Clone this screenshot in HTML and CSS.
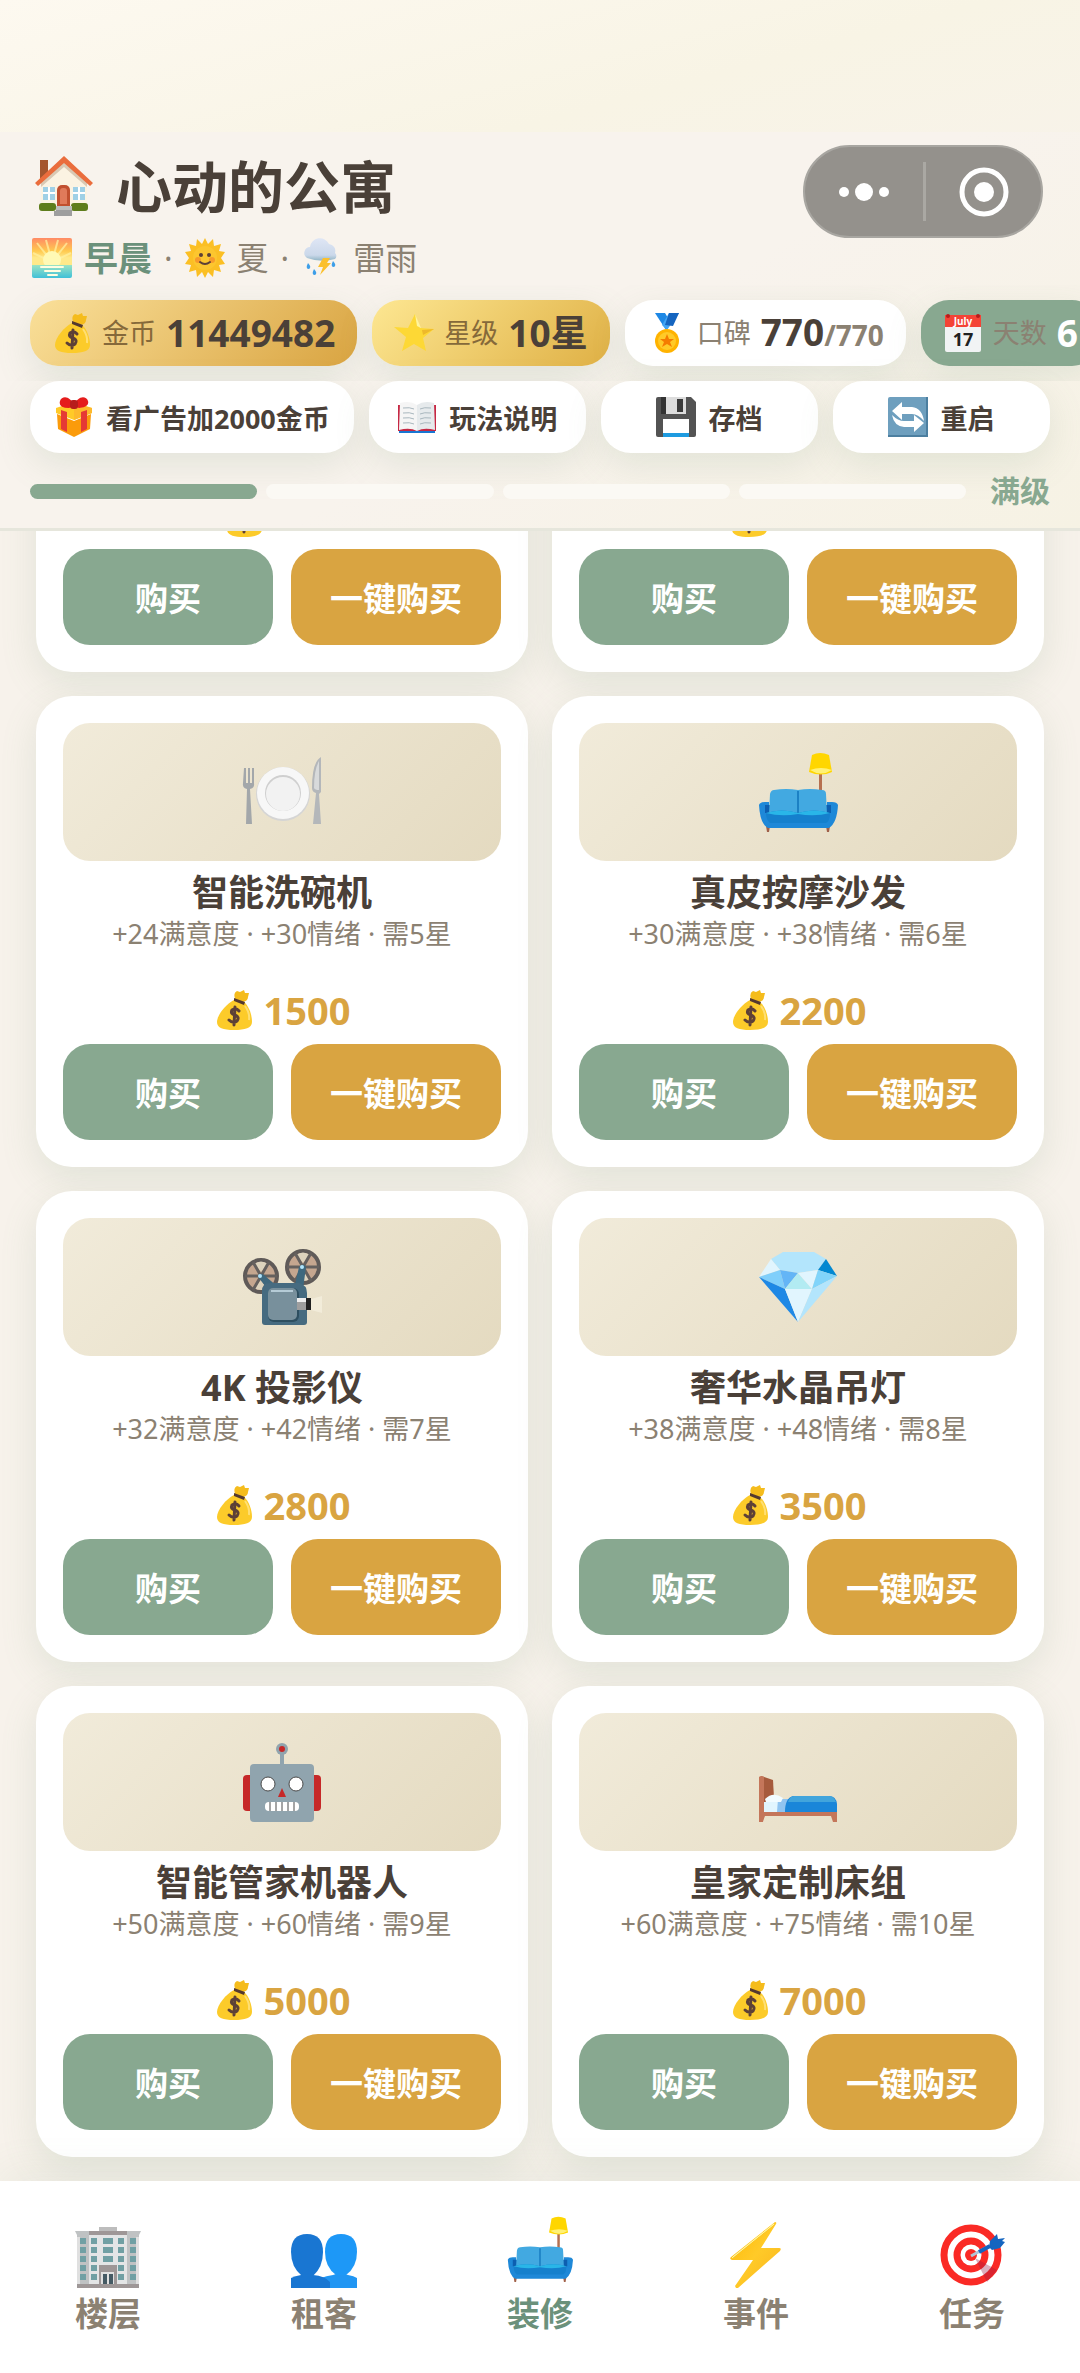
FILE: index.html
```html
<!DOCTYPE html>
<html lang="zh-CN">
<head>
<meta charset="utf-8">
<meta name="viewport" content="width=device-width, initial-scale=1">
<title>心动的公寓</title>
<link rel="stylesheet" href="styles.css">
</head>
<body>
<svg class="sprite" aria-hidden="true">
  <defs>
    <linearGradient id="g-sky" x1="0" y1="0" x2="0" y2="1"><stop offset="0" stop-color="#ff8a65"/><stop offset=".45" stop-color="#ffca4f"/><stop offset=".68" stop-color="#ffe98a"/></linearGradient>
    <linearGradient id="g-sea" x1="0" y1="0" x2="0" y2="1"><stop offset="0" stop-color="#9be3c4"/><stop offset="1" stop-color="#3fc0d8"/></linearGradient>
    <linearGradient id="g-bolt" x1="0" y1="0" x2="1" y2="1"><stop offset="0" stop-color="#feb804"/><stop offset=".5" stop-color="#ffca28"/><stop offset="1" stop-color="#f9b51e"/></linearGradient>
    <linearGradient id="g-cloud" x1="0" y1="0" x2="0" y2="1"><stop offset="0" stop-color="#dfe6f5"/><stop offset=".75" stop-color="#cbd8ea"/><stop offset="1" stop-color="#8fb4c4"/></linearGradient>
  </defs>
  <symbol id="i-house" viewBox="0 0 58 60">
    <path d="M5 4h8v20H5z" fill="#a5562f"/>
    <path d="M6 26 29 5l23 21v25H6z" fill="#fbf3e2"/>
    <path d="M6 26 29 6l23 20v5L29 11 6 31z" fill="#d9c9b4"/>
    <path d="M29 0 58 27l-3 3L29 7 3 30l-3-3z" fill="#ea6d3d"/>
    <rect x="8" y="31" width="12" height="13" fill="#9fd0e6"/><path d="M14 31v13M8 37h12" stroke="#fff" stroke-width="2"/>
    <rect x="38" y="31" width="12" height="13" fill="#9fd0e6"/><path d="M44 31v13M38 37h12" stroke="#fff" stroke-width="2"/>
    <path d="M22 50V34a5 5 0 0 1 5-5h3a5 5 0 0 1 5 5v16z" fill="#c1502f"/><path d="M25 48V35a3 3 0 0 1 3-3h1a3 3 0 0 1 3 3v13z" fill="#e07a5a"/>
    <rect x="4" y="47" width="17" height="8" rx="3" fill="#5e7d1c"/><rect x="36" y="47" width="17" height="8" rx="3" fill="#5e7d1c"/>
    <path d="M21 50h16v10H19v-5h2z" fill="#9e9e9e"/><path d="M21 50h16v4H21z" fill="#bdbdbd"/>
  </symbol>
  <symbol id="i-sunrise" viewBox="0 0 40 40">
    <rect width="40" height="29" rx="2" fill="url(#g-sky)"/>
    <path d="M20 24 1 15M20 24 5 5M20 24 14 2M20 24 26 2M20 24 35 5M20 24 39 15" stroke="#fff0a0" stroke-width="2" opacity=".75"/>
    <circle cx="20" cy="22" r="9" fill="#fff9b5"/>
    <path d="M0 27h40v11a2 2 0 0 1-2 2H2a2 2 0 0 1-2-2z" fill="url(#g-sea)"/>
    <path d="M9 29h22M13 33h15M16 37h9" stroke="#fffde0" stroke-width="2" stroke-linecap="round"/>
  </symbol>
  <symbol id="i-sun" viewBox="0 0 40 40">
    <path d="m20 0 3 6 5-5 1 7 7-2-2 7 6 1-4 6 4 6-6 1 2 7-7-2-1 7-5-5-3 6-3-6-5 5-1-7-7 2 2-7-6-1 4-6-4-6 6-1-2-7 7 2 1-7 5 5z" fill="#fbbf24"/>
    <circle cx="20" cy="20" r="12" fill="#fcc62f"/><circle cx="13" cy="22" r="3" fill="#f79a2b"/><circle cx="27" cy="22" r="3" fill="#f79a2b"/>
    <circle cx="16" cy="17" r="2" fill="#5d4037"/><circle cx="24" cy="17" r="2" fill="#5d4037"/><path d="M15 24q5 4 10 0" fill="none" stroke="#5d4037" stroke-width="2" stroke-linecap="round"/>
  </symbol>
  <symbol id="i-storm" viewBox="0 0 40 40">
    <path d="M6 20a6 6 0 0 1 3-11A10 10 0 0 1 28 6a7 7 0 0 1 6 9 4 4 0 0 1 0 6q-14 4-28-1z" fill="url(#g-cloud)"/>
    <path d="M22 20h7l-3 5h4L19 37l3-8h-5z" fill="#fbc02d"/>
    <path d="M7 25q4 4 1 6-4 0-1-6zM13 31q4 4 1 6-4 0-1-6zM32 23q4 4 1 6-4 0-1-6z" fill="#3d9ee8"/>
  </symbol>
  <symbol id="i-bag" viewBox="0 0 40 40">
    <path d="M21 9q-2-6 2-8l3 1 4-2 1 3 4 0-1 4q0 4-5 5z" fill="#f5bc1c"/>
    <path d="M20 10c-8 4-17 15-17 22 0 6 6 8 17 8s18-2 18-8c0-7-3-16-8-20z" fill="#fccb2a"/>
    <path d="M31 16q5 7 4 14" stroke="#ffdf73" stroke-width="2" fill="none"/>
    <path d="m20 8 11 4-1 3-10-4z" fill="#543930"/>
    <path d="M25 21q-3-4-7-1-2 4 3 5 5 2 2 6-4 3-8-1M21 17l-1 18" fill="none" stroke="#5d4037" stroke-width="3" stroke-linecap="round"/>
  </symbol>
  <symbol id="i-star" viewBox="0 0 40 40">
    <path d="m21 1 5 14 14 1-11 9 3 13-12-7-12 7 4-14L0 14l14 1z" fill="#fdd835"/><path d="m21 1 2 12 4 2z" fill="#fff59d"/><path d="m28 17 12-1-11 6z" fill="#eeb92b"/>
  </symbol>
  <symbol id="i-medal" viewBox="0 0 40 40">
    <path d="M8 0h10l6 10-5 7z" fill="#1e88e5"/><path d="M32 0H22l-7 12 5 5z" fill="#42a5f5"/><path d="M22 0h10l-6 13-8-1z" fill="#1565c0"/>
    <circle cx="20" cy="28" r="12" fill="#ffb300"/><circle cx="20" cy="28" r="9" fill="#ffca28"/><path d="m20 21 2 5 5 0-4 3 2 5-5-3-5 3 2-5-4-3 5 0z" fill="#f57c00"/>
  </symbol>
  <symbol id="i-gift" viewBox="0 0 40 40">
    <path d="m3 17 17 7v16L4 32zM37 17l-17 7v16l16-8z" fill="#fb9b0b"/><path d="m2 11 18-6 18 6v5l-18 7-18-7z" fill="#ffca28"/><path d="m20 7 18 4v5l-18 7z" fill="#fdb92c"/>
    <path d="m7 13 6 2v20l-6-3zM27 15l6-2v19l-6 3z" fill="#e53935"/>
    <path d="M20 9C17-1 8-2 6 4q-2 7 9 7zM20 9c3-10 12-11 14-5 2 7-9 7-9 7z" fill="#e51c1c"/><rect x="16" y="3" width="8" height="9" rx="3" fill="#b71c1c"/>
  </symbol>
  <symbol id="i-book" viewBox="0 0 40 40">
    <path d="M1 8h38v26H1z" fill="#c62844"/><path d="M2 34h36v2H2z" fill="#1976d2"/>
    <path d="M3 6q10-3 17 2v26q-7-4-18-1z" fill="#f5f5f5"/><path d="M37 6Q27 3 20 8v26q7-4 18-1z" fill="#e6eaec"/>
    <path d="M6 11q7-1 11 1M6 16q7-1 11 1M6 21q7-1 11 1M6 26q7-1 11 1M34 11q-7-1-11 1M34 16q-7-1-11 1M34 21q-7-1-11 1M34 26q-7-1-11 1" fill="none" stroke="#a9b7be" stroke-width="1"/>
  </symbol>
  <symbol id="i-disk" viewBox="0 0 40 40">
    <path d="M2 0h33l5 5v33a2 2 0 0 1-2 2H2a2 2 0 0 1-2-2V2a2 2 0 0 1 2-2z" fill="#535353"/><path d="M5 0h6v17H5z" fill="#333"/><path d="M10 0h20v17H10z" fill="#dcdcdc"/><path d="M21 2h6v13h-6z" fill="#3a3a3a"/>
    <path d="M7 22h26v18H7z" fill="#fff"/><path d="M7 36h26v4H7z" fill="#1e9be0"/>
  </symbol>
  <symbol id="i-cycle" viewBox="0 0 40 40">
    <rect width="40" height="40" rx="2" fill="#6e9fbe"/><path d="M0 38h40v2H0zM38 0h2v40h-2z" fill="#4c7fa0"/>
    <path d="m4 14 10-9v5h10q10 1 12 14-6-7-12-7H14v6zM36 26l-10 9v-5H16Q6 29 4 18q6 6 12 6h10v-6z" fill="#fff"/>
  </symbol>
  <symbol id="i-plate" viewBox="0 0 80 80">
    <path d="M2 16h2v15h2V16h2v15h2V16h2v15q1 5-4 6l2 35H4l1-35q-5-1-4-6z" fill="#a3a7aa"/>
    <circle cx="41" cy="42" r="27" fill="#d5d5d5"/><circle cx="41" cy="41" r="26" fill="#f7f7f7"/><circle cx="41" cy="41" r="18" fill="#cfcfcf"/><circle cx="41" cy="42" r="17" fill="#f2f2f2"/>
    <path d="M79 5v35l-2 2 2 30h-8l3-31q-4-1-4-5 0-26 9-31z" fill="#b4b7ba"/><path d="M77 9v29q-4 0-5-2 0-18 5-27z" fill="#d8dadb"/>
  </symbol>
  <symbol id="i-sofa" viewBox="0 0 80 80">
    <path d="M61 18h3v24h-3z" fill="#b6704f"/><path d="M54 3q8-4 17 0l3 17q-11 5-23 0z" fill="#ffd600"/><path d="M52 18q11-4 22 0-11 7-22 0z" fill="#fff176"/>
    <path d="M8 74h4l-1 6H9zM68 74h4l-1 6h-2z" fill="#a1614a"/>
    <path d="M1 53q1-3 6-3h4v15h58V50h5q5 0 6 3-1 18-9 23H10Q2 72 1 53z" fill="#1e88d8"/>
    <path d="M7 53h6v8H7zM67 53h6v8h-6z" fill="#0d5eb0"/>
    <path d="M11 62 12 42q1-4 4-4 12-2 24 0 12-2 24 0 4 0 4 4l1 20z" fill="#42a9e1"/><path d="M40 39v22" stroke="#1c81c4" stroke-width="2"/>
    <path d="M8 61q16-5 32 0 16-5 32 0 0 8-4 10H12q-4-3-4-10z" fill="#1580cd"/><path d="M8 61q16-5 32 0 16-5 32 0-15 4-32 1-17 3-32-1z" fill="#29b6e8"/>
  </symbol>
  <symbol id="i-projector" viewBox="0 0 80 80">
    <g fill="#c5a68f" stroke="#5f5a58" stroke-width="4"><circle cx="19" cy="29" r="16"/><circle cx="61" cy="20" r="16"/></g>
    <g fill="#ddd3bd"><path d="m19 25-7-8q7-5 14 0zM19 33l-7 8q7 4 14 0zM61 16l-7-8q7-5 14 0zM61 24l-7 8q7 4 14 0z"/></g>
    <path d="M3 29h32M11 15l16 28M27 15 11 43M45 20h32M53 6l16 28M69 6 53 34" stroke="#65605e" stroke-width="3"/>
    <path d="M16 30q2-5 6-2l14 12-8 5zM57 20q4-5 7 0l-3 22h-9z" fill="#3e687e"/><circle cx="18" cy="29" r="2" fill="#b3e5fc"/><circle cx="60" cy="20" r="2" fill="#b3e5fc"/>
    <path d="M28 36h29q8 2 8 10v29q0 3-3 3H23q-3 0-3-3V44q0-8 8-8z" fill="#466b80"/><rect x="26" y="41" width="31" height="34" rx="6" fill="#2e4f60"/><rect x="26" y="41" width="29" height="32" rx="5" fill="#78909c"/><path d="M29 44h22" stroke="#b5cbd6" stroke-width="2"/>
    <path d="m69 52 11-3v17l-11-3z" fill="#fffdf0" opacity=".4"/><path d="M55 51h9v12h-9z" fill="#9e9e9e"/><path d="M55 51h9v4h-9z" fill="#eee"/><path d="M64 51h5v12h-5z" fill="#212121"/>
  </symbol>
  <symbol id="i-gem" viewBox="0 0 80 80">
    <path d="m25 5h31l12 7-8 11-20 3-18-3-9-11z" fill="#b3e5fc"/><path d="M13 12 1 30l21-7z" fill="#e1f5fe"/><path d="m68 12 11 17-19-6z" fill="#0288d1"/>
    <path d="m1 30 21-7 5 19z" fill="#80cffb"/><path d="m22 23 18 3-13 16z" fill="#64b5f6"/><path d="m40 26 14 16H27z" fill="#b2ebf2"/><path d="m40 26 20-3-6 19z" fill="#e1f5fe"/><path d="m60 23 19 6-25 13z" fill="#81d4fa"/>
    <path d="m1 30 26 12 13 33z" fill="#1e88e5"/><path d="M27 42h27L40 75z" fill="#e1f5fe"/><path d="m54 42 25-13-39 46z" fill="#b3e5fc"/>
  </symbol>
  <symbol id="i-robot" viewBox="0 0 80 80">
    <path d="M38 10h4v14h-4z" fill="#90a4ae"/><circle cx="40" cy="7" r="6" fill="#90a4ae"/><circle cx="40" cy="7" r="3" fill="#c62828"/>
    <rect x="1" y="33" width="14" height="36" rx="4" fill="#c62828"/><rect x="65" y="33" width="14" height="36" rx="4" fill="#c62828"/><rect x="8" y="22" width="64" height="58" rx="4" fill="#90a4ae"/>
    <g fill="#fff" stroke="#4a4a4a"><circle cx="26" cy="42" r="7"/><circle cx="54" cy="42" r="7"/></g><path d="m40 46 4 9h-8z" fill="#c62828"/>
    <rect x="23" y="60" width="34" height="9" rx="4" fill="#fff"/><path d="M28 60v9M34 60v9M40 60v9M46 60v9M52 60v9" stroke="#4a4a4a" stroke-width="1"/>
  </symbol>
  <symbol id="i-bed" viewBox="0 0 80 80">
    <path d="m3 34 12 4 1 18v14H4z" fill="#a65b3d"/><path d="M1 35q2-2 5 0v37l-1 8H1z" fill="#c4765a"/>
    <path d="M6 60h25v10H6z" fill="#e1f5fe"/><path d="M20 57h12v13H19z" fill="#90c4f0"/><path d="M7 57q8-8 18-1l-2 4H8z" fill="#f1fbff"/>
    <path d="M27 70q0-14 8-16h36q7 0 8 8v8z" fill="#1a86d9"/><path d="M30 60q2-6 6-6h35q5 0 7 6z" fill="#42a5dc"/>
    <path d="M5 70h74v10h-4l-2-6H7l-2 5z" fill="#c4765a"/>
  </symbol>
  <symbol id="i-building" viewBox="0 0 66 66">
    <path d="M24 5h18v6H24z" fill="#bdbdbd"/><path d="M0 9h66l-2 4v51H2V13z" fill="#bfc2c3"/><path d="M14 12h38v50H14z" fill="#e3e5e6"/><path d="M14 9h38v4H14z" fill="#9e9797"/>
    <path d="M2 15h3v47H2zM61 15h3v47h-3z" fill="#e0e0e0"/>
    <path d="M5 16h6v6H5zm11 0h6v6h-6zm12 0h10v6H28zm15 0h6v6h-6zm12 0h6v6h-6zM5 25h6v6H5zm11 0h6v6h-6zm12 0h10v6H28zm15 0h6v6h-6zm12 0h6v6h-6zM5 34h6v6H5zm11 0h6v6h-6zm12 0h10v6H28zm15 0h6v6h-6zm12 0h6v6h-6zM5 43h6v6H5zm11 0h6v6h-6zm27 0h6v6h-6zm12 0h6v6h-6zM5 52h6v6H5zm11 0h6v6h-6zm27 0h6v6h-6zm12 0h6v6h-6z" fill="#70a0a4"/>
    <path d="M24 43h18v20H24z" fill="#9e9797"/><path d="M26 50h13v13H26z" fill="#e0e0e0"/><path d="M28 52h4v10h-4zM34 52h4v10h-4z" fill="#455a64"/><path d="M2 62h62v4H2z" fill="#9e9797"/>
  </symbol>
  <symbol id="i-people" viewBox="0 0 66 66">
    <path d="M30 66V56q5-2 12-3l3-1h9l3 1q6 1 9 3v10z" fill="#2196f3"/><path d="M34 30q0-18 16-18t16 18q0 15-11 23H45Q34 45 34 30z" fill="#1d98f7"/>
    <path d="M0 66V56q4-2 10-3h12q12 1 17 7v6z" fill="#1976d2"/><path d="M0 30q0-18 16-18t16 18q0 15-10 24H11Q0 45 0 30z" fill="#1976d2"/>
  </symbol>
  <symbol id="i-bolt" viewBox="0 0 66 66"><path d="M52 0q2 0 1 2L38 26h18q3 0 1 3L15 66h-2l-1-2 18-26H9q-3-1-1-3z" fill="url(#g-bolt)"/><path d="M51 2 11 34l-2 2z" stroke="#fff59d" stroke-width="1"/></symbol>
  <symbol id="i-target" viewBox="0 0 66 66">
    <g stroke-width="7" fill="#fff" stroke="#fa2a25"><circle cx="32" cy="33" r="27"/><circle cx="32" cy="33" r="14"/></g><circle cx="32" cy="33" r="6" fill="#fa2a25"/>
    <path d="m36 36 22 12-10 12z" fill="#9b1b44" opacity=".35"/><path d="m32 34 18-10" stroke="#b0c4d6" stroke-width="3"/><path d="m40 30 11-6" stroke="#1565c0" stroke-width="4"/><path d="m50 25 1-6 7-7 1 5 7-1-3 3 3 1-5 6-8 2z" fill="#1565c0"/>
  </symbol>
</svg>

<div class="app">
  <header class="top">
    <h1 class="brand"><svg class="brand-icon" aria-hidden="true"><use href="#i-house"/></svg>心动的公寓</h1>
    <p class="moment">
      <span class="moment-part moment-now"><svg class="ico" aria-hidden="true"><use href="#i-sunrise"/></svg>早晨</span>
      <span class="dot">·</span>
      <span class="moment-part"><svg class="ico" aria-hidden="true"><use href="#i-sun"/></svg>夏</span>
      <span class="dot">·</span>
      <span class="moment-part"><svg class="ico" aria-hidden="true"><use href="#i-storm"/></svg>雷雨</span>
    </p>
    <div class="capsule">
      <button class="capsule-btn" type="button" aria-label="更多"><svg viewBox="0 0 50 18" width="50" height="18"><circle cx="5" cy="9" r="5"/><circle cx="25" cy="9" r="9"/><circle cx="45" cy="9" r="5"/></svg></button>
      <button class="capsule-btn" type="button" aria-label="关闭"><svg viewBox="0 0 50 50" width="50" height="50"><circle class="ring" cx="25" cy="25" r="22"/><circle cx="25" cy="25" r="10"/></svg></button>
    </div>
    <div class="stats">
      <div class="stat stat-gold"><svg class="ico" aria-hidden="true"><use href="#i-bag"/></svg><span class="stat-label">金币</span><strong class="stat-value">11449482</strong></div>
      <div class="stat stat-star"><svg class="ico" aria-hidden="true"><use href="#i-star"/></svg><span class="stat-label">星级</span><strong class="stat-value">10星</strong></div>
      <div class="stat"><svg class="ico" aria-hidden="true"><use href="#i-medal"/></svg><span class="stat-label">口碑</span><strong class="stat-value">770<small class="stat-max">/770</small></strong></div>
      <div class="stat stat-day">
        <svg class="ico" viewBox="0 0 40 40" aria-hidden="true">
          <rect x="2" y="2" width="36" height="37" rx="2" fill="#f1f3f4"/><path d="M2 2h36v12H2z" fill="#f44336"/><circle cx="5" cy="3" r="2" fill="#b71c1c"/><circle cx="35" cy="3" r="2" fill="#b71c1c"/>
          <text class="cal-month" x="20" y="12">July</text>
          <text class="cal-day" x="20" y="33">17</text>
        </svg>
        <span class="stat-label">天数</span><strong class="stat-value">6</strong>
      </div>
    </div>
    <div class="actions">
      <button class="action action-wide" type="button"><svg class="ico" aria-hidden="true"><use href="#i-gift"/></svg>看广告加2000金币</button>
      <button class="action" type="button"><svg class="ico" aria-hidden="true"><use href="#i-book"/></svg>玩法说明</button>
      <button class="action" type="button"><svg class="ico" aria-hidden="true"><use href="#i-disk"/></svg>存档</button>
      <button class="action" type="button"><svg class="ico" aria-hidden="true"><use href="#i-cycle"/></svg>重启</button>
    </div>
    <div class="level">
      <span class="level-seg level-on"></span><span class="level-seg"></span><span class="level-seg"></span><span class="level-seg"></span>
      <span class="level-text">满级</span>
    </div>
  </header>

  <main class="scroll">
    <div class="shop">
      <article class="card">
        <p class="price"><svg class="ico" aria-hidden="true"><use href="#i-bag"/></svg><span class="amount-3"></span></p>
        <div class="buy"><button class="btn" type="button">购买</button><button class="btn btn-all" type="button">一键购买</button></div>
      </article>
      <article class="card">
        <p class="price"><svg class="ico" aria-hidden="true"><use href="#i-bag"/></svg><span class="amount-4"></span></p>
        <div class="buy"><button class="btn" type="button">购买</button><button class="btn btn-all" type="button">一键购买</button></div>
      </article>
      <article class="card">
        <div class="thumb"><svg class="thumb-icon" aria-hidden="true"><use href="#i-plate"/></svg></div>
        <h2 class="name">智能洗碗机</h2>
        <p class="effect">+24满意度 · +30情绪 · 需5星</p>
        <p class="price"><svg class="ico" aria-hidden="true"><use href="#i-bag"/></svg>1500</p>
        <div class="buy"><button class="btn" type="button">购买</button><button class="btn btn-all" type="button">一键购买</button></div>
      </article>
      <article class="card">
        <div class="thumb"><svg class="thumb-icon" aria-hidden="true"><use href="#i-sofa"/></svg></div>
        <h2 class="name">真皮按摩沙发</h2>
        <p class="effect">+30满意度 · +38情绪 · 需6星</p>
        <p class="price"><svg class="ico" aria-hidden="true"><use href="#i-bag"/></svg>2200</p>
        <div class="buy"><button class="btn" type="button">购买</button><button class="btn btn-all" type="button">一键购买</button></div>
      </article>
      <article class="card">
        <div class="thumb"><svg class="thumb-icon" aria-hidden="true"><use href="#i-projector"/></svg></div>
        <h2 class="name">4K 投影仪</h2>
        <p class="effect">+32满意度 · +42情绪 · 需7星</p>
        <p class="price"><svg class="ico" aria-hidden="true"><use href="#i-bag"/></svg>2800</p>
        <div class="buy"><button class="btn" type="button">购买</button><button class="btn btn-all" type="button">一键购买</button></div>
      </article>
      <article class="card">
        <div class="thumb"><svg class="thumb-icon" aria-hidden="true"><use href="#i-gem"/></svg></div>
        <h2 class="name">奢华水晶吊灯</h2>
        <p class="effect">+38满意度 · +48情绪 · 需8星</p>
        <p class="price"><svg class="ico" aria-hidden="true"><use href="#i-bag"/></svg>3500</p>
        <div class="buy"><button class="btn" type="button">购买</button><button class="btn btn-all" type="button">一键购买</button></div>
      </article>
      <article class="card">
        <div class="thumb"><svg class="thumb-icon" aria-hidden="true"><use href="#i-robot"/></svg></div>
        <h2 class="name">智能管家机器人</h2>
        <p class="effect">+50满意度 · +60情绪 · 需9星</p>
        <p class="price"><svg class="ico" aria-hidden="true"><use href="#i-bag"/></svg>5000</p>
        <div class="buy"><button class="btn" type="button">购买</button><button class="btn btn-all" type="button">一键购买</button></div>
      </article>
      <article class="card">
        <div class="thumb"><svg class="thumb-icon" aria-hidden="true"><use href="#i-bed"/></svg></div>
        <h2 class="name">皇家定制床组</h2>
        <p class="effect">+60满意度 · +75情绪 · 需10星</p>
        <p class="price"><svg class="ico" aria-hidden="true"><use href="#i-bag"/></svg>7000</p>
        <div class="buy"><button class="btn" type="button">购买</button><button class="btn btn-all" type="button">一键购买</button></div>
      </article>
    </div>
  </main>

  <nav class="tabs">
    <a class="tab" href="#floors"><svg class="tab-icon" aria-hidden="true"><use href="#i-building"/></svg>楼层</a>
    <a class="tab" href="#tenants"><svg class="tab-icon" aria-hidden="true"><use href="#i-people"/></svg>租客</a>
    <a class="tab tab-active" href="#decor" aria-current="page"><svg class="tab-icon" aria-hidden="true"><use href="#i-sofa"/></svg>装修</a>
    <a class="tab" href="#events"><svg class="tab-icon" aria-hidden="true"><use href="#i-bolt"/></svg>事件</a>
    <a class="tab" href="#tasks"><svg class="tab-icon" aria-hidden="true"><use href="#i-target"/></svg>任务</a>
  </nav>
</div>
</body>
</html>
```
FILE: styles.css
```css
:root {
  --ink: #4a4038;
  --muted: #8b8172;
  --green: #88a890;
  --green-deep: #6b917b;
  --gold: #d9a441;
  --shadow: 0 12px 36px rgba(120, 150, 120, .16);
}

* { box-sizing: border-box; }

body {
  margin: 0;
  font-family: "Noto Sans", "Noto Sans CJK SC", sans-serif;
  color: var(--ink);
  background: linear-gradient(165deg, #fdf9f0 0%, #f8f4e5 10%, #f7f2eb 20%, #f7f2eb 100%);
}

h1, h2, p { margin: 0; }

button {
  border: 0;
  padding: 0;
  font: inherit;
  color: inherit;
  cursor: pointer;
}

.sprite { position: absolute; width: 0; height: 0; }

.app {
  display: flex;
  flex-direction: column;
  height: 100vh;
  padding-top: 132px;
}

.ico { flex: none; width: 40px; height: 40px; }

/* Header */
.top {
  position: relative;
  z-index: 1;
  padding: 20px 30px 19px;
  background: linear-gradient(150deg, #f8f3ed 55%, #f6f2e4 100%);
  border-bottom: 3px solid #e6e6dc;
}

.brand {
  display: flex;
  align-items: center;
  gap: 23px;
  padding-left: 5px;
  font-size: 56px;
  line-height: 68px;
  font-weight: 700;
}

.brand-icon { width: 58px; height: 60px; }

.moment {
  display: flex;
  align-items: center;
  gap: 12px;
  margin-top: 18px;
  padding-left: 2px;
  font-size: 32px;
  line-height: 40px;
  color: var(--muted);
}

.moment-part { display: flex; align-items: center; gap: 12px; }
.moment-now { font-size: 34px; font-weight: 700; color: var(--green-deep); }

.capsule {
  position: absolute;
  top: 13px;
  right: 37px;
  display: grid;
  grid-template-columns: 1fr 1fr;
  width: 240px;
  height: 93px;
  border: 2px solid #a8a6a1;
  border-radius: 48px;
  background: #94918c;
}

.capsule-btn {
  display: grid;
  place-items: center;
  margin: 15px 0;
  background: none;
  fill: #fff;
}
.capsule-btn + .capsule-btn { border-left: 3px solid #aaa8a3; }
.ring { fill: none; stroke: #fff; stroke-width: 5px; }

.stats {
  display: flex;
  gap: 15px;
  margin: 7px -30px 0;
  padding: 15px 0 15px 30px;
  overflow-x: auto;
  scrollbar-width: none;
}

.stat {
  display: flex;
  flex: none;
  align-items: center;
  gap: 10px;
  height: 66px;
  padding: 0 22px;
  border-radius: 28px;
  background: #fff;
  box-shadow: var(--shadow);
  line-height: 40px;
}

.stat-gold { background: linear-gradient(135deg, #fae09a, #d9a441); }
.stat-star { background: linear-gradient(135deg, #fde792, #dfb045); }
.stat-day { background: var(--green); }
.stat-label { font-size: 27px; color: var(--muted); }
.stat-gold .stat-label, .stat-star .stat-label { color: #85693a; }
.stat-value { font-size: 37px; font-weight: 700; }
.stat-day .stat-value { color: #fff; }
.stat-max { font-size: 28px; color: var(--muted); }

.cal-month, .cal-day { font-weight: 700; text-anchor: middle; }
.cal-month { font-size: 10px; fill: #fff; }
.cal-day { font-size: 18px; fill: #212121; }

.actions {
  display: flex;
  gap: 15px;
}

.action {
  display: flex;
  flex: 1;
  align-items: center;
  justify-content: center;
  gap: 12px;
  height: 72px;
  border-radius: 30px;
  background: #fff;
  box-shadow: var(--shadow);
  font-size: 27px;
  font-weight: 700;
  white-space: nowrap;
}
.action-wide { flex: none; padding: 0 24px; }

.level {
  display: flex;
  align-items: center;
  gap: 9px;
  margin-top: 20px;
}
.level-seg {
  flex: 1;
  height: 15px;
  border-radius: 8px;
  background: #fbf9f4;
}
.level-on { background: var(--green); }
.level-text {
  margin-left: 15px;
  font-size: 30px;
  line-height: 36px;
  font-weight: 700;
  color: var(--green);
}

/* Shop list, opened at its last row */
.scroll {
  display: flex;
  flex: 1;
  flex-direction: column-reverse;
  min-height: 0;
  overflow-y: auto;
  scrollbar-width: none;
}

.shop {
  display: grid;
  grid-template-columns: 1fr 1fr;
  gap: 24px;
  padding: 24px 36px;
}

.card {
  display: flex;
  flex-direction: column;
  justify-content: flex-end;
  min-height: 471px;
  padding: 27px;
  border-radius: 36px;
  background: #fff;
  box-shadow: var(--shadow);
  text-align: center;
}

.thumb {
  display: grid;
  place-items: center;
  height: 138px;
  border-radius: 27px;
  background: linear-gradient(135deg, #f1ebda, #e4dac0);
}
.thumb-icon { width: 80px; height: 80px; }

.name {
  margin-top: 10px;
  font-size: 36px;
  line-height: 44px;
  font-weight: 700;
}

.effect {
  font-size: 27px;
  line-height: 38px;
  color: var(--muted);
}

.price {
  display: flex;
  align-items: center;
  justify-content: center;
  gap: 10px;
  margin: 35px 0 12px;
  font-size: 38px;
  line-height: 44px;
  font-weight: 700;
  color: var(--gold);
}
.amount-3 { width: 66px; }
.amount-4 { width: 88px; }

.buy {
  display: grid;
  grid-template-columns: 1fr 1fr;
  gap: 18px;
}

.btn {
  height: 96px;
  border-radius: 27px;
  background: var(--green);
  color: #fff;
  font-size: 33px;
  font-weight: 700;
}
.btn-all { background: var(--gold); }

/* Bottom tabs */
.tabs {
  position: relative;
  z-index: 1;
  display: grid;
  grid-template-columns: repeat(5, 1fr);
  height: 192px;
  padding-top: 41px;
  background: #fff;
  box-shadow: 0 -12px 36px rgba(120, 150, 120, .08);
}

.tab {
  display: flex;
  flex-direction: column;
  align-items: center;
  gap: 6px;
  font-size: 33px;
  line-height: 40px;
  font-weight: 700;
  color: var(--muted);
  text-decoration: none;
}
.tab-icon { width: 66px; height: 66px; }
.tab-active { color: var(--green-deep); }
.tab-active .tab-icon { transform: translateY(-6px); }
```
